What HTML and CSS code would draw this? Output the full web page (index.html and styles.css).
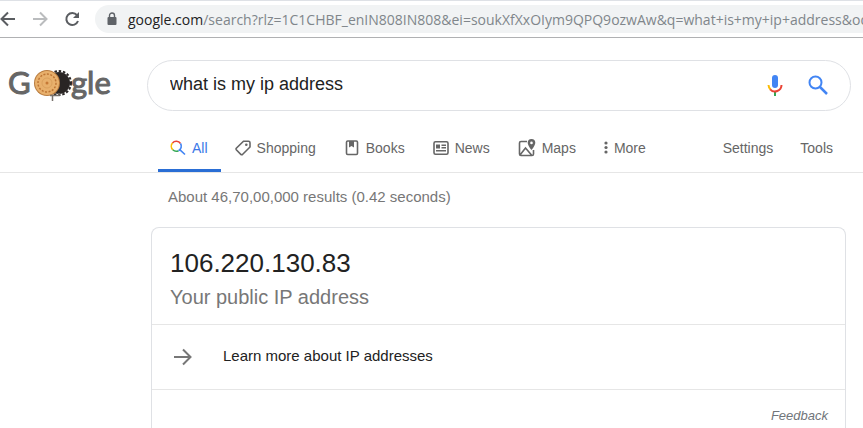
FILE: index.html
```html
<!DOCTYPE html>
<html lang="en">
<head>
	<meta charset="utf-8">
	<meta name="viewport" content="width=device-width, initial-scale=1">
	<title>what is my ip address - Google Search</title>
	<link rel="stylesheet" href="styles.css">
</head>
<body>
	<div class="toolbar">
		<button class="nav-btn" aria-label="Back">
			<svg width="18" height="18" viewBox="0 0 18 18"><path d="M15 9H2M8 2.500L1.500 9L8 15.500" fill="none" stroke="#5a5d61" stroke-width="2"/></svg>
		</button>
		<button class="nav-btn" aria-label="Forward" disabled>
			<svg width="18" height="18" viewBox="0 0 18 18"><path d="M1 9H14M8 2.500L14.500 9L8 15.500" fill="none" stroke="#babcbe" stroke-width="2"/></svg>
		</button>
		<button class="nav-btn" aria-label="Reload">
			<svg width="18" height="18" viewBox="0 0 18 18"><path d="M13 5.200A6 6 0 1 0 14 11" fill="none" stroke="#5a5d61" stroke-width="2"/><path d="M15 2V8H9z" fill="#5a5d61"/></svg>
		</button>
		<div class="address">
			<svg width="10" height="14" viewBox="0 0 10 14"><path d="M2.500 6V3.500a2.500 2.500 0 0 1 5 0V6" fill="none" stroke="#5f6368" stroke-width="1.400"/><rect x="0.500" y="5" width="9" height="8" rx="1" fill="#5f6368"/></svg>
			<label for="url">google.com</label>
			<input id="url" type="text" value="/search?rlz=1C1CHBF_enIN808IN808&amp;ei=soukXfXxOIym9QPQ9ozwAw&amp;q=what+is+my+ip+address&amp;oq=what+is+my+ip">
		</div>
	</div>

	<header class="top">
		<a class="logo" href="#" aria-label="Google">
			<svg width="104" height="50" viewBox="0 -5 104 50">
				<g class="logo-text">
					<text x="0" y="28">G</text>
					<text x="63" y="28">gle</text>
				</g>
				<circle cx="51" cy="17" r="11" fill="#292524"/>
				<circle cx="51" cy="17" r="12" fill="none" stroke="#292524" stroke-width="2" stroke-dasharray="2.500 1.800"/>
				<circle cx="39" cy="17" r="13" fill="#b87b3e"/>
				<circle cx="39" cy="17" r="12" fill="#e8b06c"/>
				<circle cx="39" cy="17" r="9" fill="none" stroke="#bd7535" stroke-width="1.500" stroke-dasharray="2 1.500"/>
				<circle cx="39" cy="17" r="5" fill="none" stroke="#dba05c"/>
				<circle cx="39" cy="17" r="1.500" fill="#c67936"/>
				<path d="M42 29.500H51V27M44.500 30V35" fill="none" stroke="#77716b" stroke-width="1.500"/>
			</svg>
		</a>
		<form class="search" role="search">
			<input type="text" name="q" aria-label="Search" value="what is my ip address">
			<button type="button" aria-label="Search by voice">
				<svg width="24" height="24" viewBox="0 0 24 24">
					<rect x="9" y="1" width="6" height="13" rx="3" fill="#4285f4"/>
					<path d="M11 18h2v4h-2z" fill="#34a853"/>
					<path d="M5.500 11A6.500 6.500 0 0 0 7.600 15.500" fill="none" stroke="#fbbc05" stroke-width="2"/>
					<path d="M7.200 15.300A6.500 6.500 0 0 0 18.500 11" fill="none" stroke="#ea4335" stroke-width="2"/>
				</svg>
			</button>
			<button type="submit" aria-label="Google Search">
				<svg width="24" height="24" viewBox="0 0 24 24"><circle cx="9.500" cy="8.500" r="6" fill="none" stroke="#4285f4" stroke-width="2"/><path d="M14 13l7 7" stroke="#4285f4" stroke-width="2.500"/></svg>
			</button>
		</form>
	</header>

	<nav class="tabs">
		<a class="tab active" href="#">
			<svg width="16" height="16" viewBox="0 0 16 16" fill="none" stroke-width="1.600">
				<path d="M2.500 3A5 5 0 0 1 10.500 3.500" stroke="#ea4335"/>
				<path d="M2.500 3A5 5 0 0 0 2.800 9.800" stroke="#fbbc05"/>
				<path d="M2.800 9.800A5 5 0 0 0 8.500 10.700" stroke="#34a853"/>
				<path d="M10.500 3.500A5 5 0 0 1 8.500 10.700M10 9.800L15 14.500" stroke="#4285f4"/>
			</svg>
			All
		</a>
		<a class="tab" href="#">
			<svg width="16" height="16" viewBox="0 0 16 16"><path d="M8.500 1.200H13.500Q15 1.200 15 2.700V7L7.500 14.500Q6.800 15 6 14.500L1.300 9.700Q.8 9 1.300 8.300z" fill="none" stroke="#666" stroke-width="1.600"/><circle cx="11.300" cy="4.800" r="1.300" fill="#666"/></svg>
			Shopping
		</a>
		<a class="tab" href="#">
			<svg width="16" height="16" viewBox="0 0 16 16"><rect x="2.500" y="1" width="11" height="13.500" rx="1.200" fill="none" stroke="#666" stroke-width="1.600"/><path d="M5 1H10V7.500L7.500 6L5 7.500z" fill="#666"/></svg>
			Books
		</a>
		<a class="tab" href="#">
			<svg width="16" height="16" viewBox="0 0 16 16"><rect x="1" y="1.800" width="14" height="12.400" rx="1.500" fill="none" stroke="#666" stroke-width="1.600"/><path d="M3 4.500H7V8.500H3zM8.500 4.500H13V6H8.500zM8.500 7H13V8.500H8.500zM3 10H13V11.500H3z" fill="#666"/></svg>
			News
		</a>
		<a class="tab" href="#">
			<svg width="18" height="18" viewBox="0 0 18 18"><path d="M9 2.500H3Q1.500 2.500 1.500 4V15Q1.500 16.500 3 16.500H14Q15.500 16.500 15.500 15V11M2 16L7.500 9L13.500 16" fill="none" stroke="#666" stroke-width="1.600"/><path d="M13.500 0A3.800 3.800 0 0 0 9.700 3.800C9.700 6.600 13.500 11 13.500 11S17.300 6.600 17.300 3.800A3.800 3.800 0 0 0 13.500 0zM13.500 2.600a1.300 1.300 0 1 1 0 2.600a1.300 1.300 0 0 1 0-2.600z" fill="#666"/></svg>
			Maps
		</a>
		<a class="tab more" href="#">
			<svg width="4" height="16" viewBox="0 0 4 16" fill="#666"><circle cx="2" cy="3" r="1.600"/><circle cx="2" cy="7.500" r="1.600"/><circle cx="2" cy="12" r="1.600"/></svg>
			More
		</a>
		<div class="tools">
			<a href="#">Settings</a>
			<a href="#">Tools</a>
		</div>
	</nav>

	<main>
		<p class="stats">About 46,70,00,000 results (0.42 seconds)</p>
		<section class="card">
			<div class="answer">
				<h1>106.220.130.83</h1>
				<p>Your public IP address</p>
			</div>
			<a class="learn" href="#">
				<svg width="20" height="20" viewBox="0 0 20 20"><path d="M2 10H18M11 2.500L18.500 10L11 17.500" fill="none" stroke="#777" stroke-width="2"/></svg>
				<span>Learn more about IP addresses</span>
			</a>
			<a class="feedback" href="#">Feedback</a>
		</section>
	</main>
</body>
</html>
```

FILE: styles.css
```css
* {
  box-sizing: border-box;
}
body {
  display: flex;
  flex-direction: column;
  min-height: 100vh;
  margin: 0;
  background: #fff;
  color: #222;
  font-family: "Liberation Sans", Arial, sans-serif;
  font-size: 14px;
}
a {
  color: inherit;
  text-decoration: none;
}
h1, p {
  margin: 0;
  font-weight: normal;
}
button {
  display: flex;
  padding: 0;
  border: 0;
  background: none;
}
input {
  min-width: 0;
  padding: 0;
  border: 0;
  outline: 0;
  background: none;
  font: inherit;
}
svg {
  display: block;
  flex: none;
}

/* browser bar */
.toolbar {
  display: flex;
  align-items: center;
  gap: 14px;
  height: 38px;
  border-top: 1px solid #dee1e6;
  border-bottom: 1px solid #b0b1b3;
}
.address {
  display: flex;
  flex: 1;
  align-items: center;
  height: 28px;
  margin-left: -1px;
  padding-left: 12px;
  border-radius: 14px 0 0 14px;
  background: #f1f3f4;
  color: #222;
  font-family: "Open Sans", sans-serif;
  font-size: 14px;
}
.address label {
  margin-left: 11px;
}
.address input {
  flex: 1;
  color: #80868b;
}

/* search box */
.top {
  display: flex;
  align-items: center;
  gap: 35px;
  padding: 22px 12px 0 8px;
}
.logo-text {
  fill: #666;
  stroke: #666;
  font-family: Lato, sans-serif;
  font-size: 31px;
}
.search {
  display: flex;
  flex: 1;
  align-items: center;
  gap: 19px;
  height: 51px;
  padding: 0 20px 0 22px;
  border: 1px solid #dfe1e5;
  border-radius: 26px;
}
.search input {
  flex: 1;
  padding-bottom: 2px;
  color: #222;
  font-size: 18px;
}

/* result types */
.tabs {
  display: flex;
  height: 62px;
  padding: 0 30px 0 158px;
  border-bottom: 1px solid #e6e6e6;
  color: #666;
}
.tab {
  display: flex;
  align-items: center;
  gap: 6px;
  margin-right: 28px;
  padding-top: 12px;
}
.active {
  margin-right: 14px;
  padding: 12px 13px 0 12px;
  box-shadow: inset 0 -3px #2a6ed5;
  color: #3b78e7;
}
.more {
  margin-right: 0;
}
.tools {
  display: flex;
  align-items: center;
  gap: 27px;
  margin-left: auto;
  padding-top: 12px;
}

/* results */
main {
  display: flex;
  flex: 1;
  flex-direction: column;
  padding: 12px 17px 0 151px;
}
.stats {
  padding-left: 17px;
  color: #777;
  font-size: 15px;
  line-height: 24px;
}
.card {
  flex: 1;
  margin-top: 18px;
  border: 1px solid #dfe1e5;
  border-bottom: 0;
  border-radius: 8px 8px 0 0;
}
.answer {
  padding: 17px 18px 11px;
}
.answer h1 {
  font-size: 26px;
  line-height: 36px;
}
.answer p {
  color: #777;
  font-size: 20px;
  line-height: 32px;
}
.learn {
  display: flex;
  align-items: center;
  gap: 31px;
  height: 66px;
  padding: 0 20px;
  border-top: 1px solid #e6e6e6;
  border-bottom: 1px solid #e6e6e6;
  font-size: 15px;
}
.learn span {
  padding-bottom: 3px;
}
.feedback {
  display: block;
  padding: 18px 17px 0 0;
  color: #70757a;
  font-size: 13px;
  font-style: italic;
  line-height: 16px;
  text-align: right;
}
```
